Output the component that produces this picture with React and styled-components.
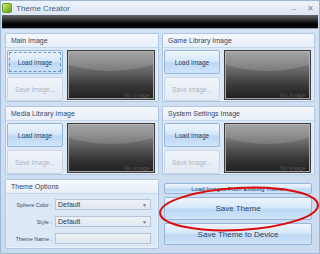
import React from "react";
import styled, { createGlobalStyle } from "styled-components";

const Global = createGlobalStyle`
  html, body { margin: 0; padding: 0; background: #fff; }
  body { font-family: "Liberation Sans", Arial, sans-serif; }
`;

const Window = styled.div`
  position: relative;
  width: 320px;
  height: 254px;
  box-sizing: border-box;
  background: #cddcef;
  border: 1px solid #9fb7d6;
  display: flex;
  flex-direction: column;
  overflow: hidden;
`;

const TitleBar = styled.div`
  height: 14px;
  display: flex;
  align-items: center;
  padding: 0 5px 0 1px;
  background: linear-gradient(#eef3fa, #dbe6f3);
  color: #4b5c7c;
  font-size: 8px;
  gap: 4px;
`;

const AppIcon = styled.div`
  width: 10px;
  height: 10px;
  border-radius: 2px;
  background: linear-gradient(135deg, #d8f07a, #8cc43a 55%, #5f9a1e);
  border: 1px solid #6c9a2c;
  box-sizing: border-box;
`;

const Title = styled.span`
  flex: 1;
`;

const Ctrl = styled.span`
  color: #7a889c;
  font-size: 8px;
  margin-left: 7px;
`;

const Strip = styled.div`
  height: 13px;
  margin: 0 1px;
  background: linear-gradient(#6a6a6a, #262626 45%, #000 70%, #0a0a0a);
  border-bottom: 1px solid #8aa2c2;
`;

const Body = styled.div`
  flex: 1;
  display: grid;
  grid-template-columns: 154px 153px;
  grid-template-rows: 69px 69px 70px;
  column-gap: 3px;
  row-gap: 4px;
  padding: 4px 0 0 4px;
  background: linear-gradient(#d3e1f3, #cbdbef);
`;

const Panel = styled.div`
  box-sizing: border-box;
  border: 1px solid #aec5e3;
  border-radius: 2px;
  background: #dde8f6;
  display: flex;
  flex-direction: column;
  box-shadow: inset 0 0 0 1px #eaf1fa;
`;

const PanelHeader = styled.div`
  height: 13px;
  flex: none;
  display: flex;
  align-items: center;
  padding-left: 5px;
  font-size: 7px;
  color: #3a4660;
  background: linear-gradient(#f5f8fd, #e7eff9);
  border-bottom: 1px solid #c6d7ec;
`;

const PanelContent = styled.div`
  display: flex;
  gap: 4px;
  padding: 2px 3px 0 1px;
`;

const ButtonCol = styled.div`
  display: flex;
  flex-direction: column;
  gap: 3px;
`;

const Btn = styled.div`
  box-sizing: border-box;
  width: ${(p) => p.$w || 56}px;
  height: ${(p) => p.$h || 24}px;
  display: flex;
  align-items: center;
  justify-content: center;
  font-size: ${(p) => p.$fs || 6.5}px;
  border-radius: 2px;
  white-space: nowrap;
  overflow: hidden;
  color: ${(p) => (p.$disabled ? "#aab6c6" : "#2a3e62")};
  border: 1px solid ${(p) => (p.$disabled ? "#c9d6e7" : "#93b6de")};
  background: ${(p) =>
    p.$disabled
      ? "linear-gradient(#f0f4fa, #e3eaf4)"
      : "linear-gradient(#eef5fd, #d6e8fa 45%, #bcd8f4 55%, #cfe4f9)"};
  outline: ${(p) => (p.$focus ? "1px dashed #6f93c0" : "none")};
  outline-offset: -3px;
`;

const Preview = styled.div`
  position: relative;
  box-sizing: border-box;
  width: 88px;
  height: 50px;
  border: 1px solid #3c3c3c;
  background: linear-gradient(#9a9a9a, #6e6e6e 35%, #3a3a3a 70%, #1f1f1f);
  overflow: hidden;
  box-shadow: inset 0 0 0 1px #a8a8a8;
`;

const Gloss = styled.div`
  position: absolute;
  left: -30px;
  right: -30px;
  top: -50px;
  height: 70px;
  border-radius: 50%;
  background: linear-gradient(rgba(255,255,255,0.05), rgba(255,255,255,0.14));
`;

const NoImage = styled.span`
  position: absolute;
  right: 4px;
  bottom: 1px;
  font-size: 6px;
  color: #5a5a5a;
`;

const Form = styled.div`
  display: grid;
  grid-template-columns: 45px 96px;
  column-gap: 3px;
  row-gap: 6px;
  padding: 5px 0 0 1px;
  align-items: center;
`;

const Label = styled.span`
  font-size: 5.5px;
  color: #3c4a64;
  text-align: right;
  white-space: nowrap;
`;

const Field = styled.div`
  box-sizing: border-box;
  height: 11px;
  border: 1px solid #b4c5da;
  background: linear-gradient(#edf1f6, #e1e8f0);
  display: flex;
  align-items: center;
  justify-content: space-between;
  padding: 0 3px 0 2px;
  font-size: 7px;
  color: #2e3440;
`;

const Arrow = styled.span`
  font-size: 5px;
  color: #6a7a90;
`;

const ActionCol = styled.div`
  display: flex;
  flex-direction: column;
  gap: 3px;
  padding: 4px 0 0 2px;
`;

const Circle = styled.svg`
  position: absolute;
  left: 0;
  top: 0;
  pointer-events: none;
`;

function ImagePanel({ title }) {
  return (
    <Panel>
      <PanelHeader>{title}</PanelHeader>
      <PanelContent>
        <ButtonCol>
          <Btn $focus={title === "Main Image"}>Load Image</Btn>
          <Btn $disabled>Save Image...</Btn>
        </ButtonCol>
        <Preview>
          <Gloss />
          <NoImage>No Image</NoImage>
        </Preview>
      </PanelContent>
    </Panel>
  );
}

export default function App() {
  return (
    <>
      <Global />
      <Window>
        <TitleBar>
          <AppIcon />
          <Title>Theme Creator</Title>
          <Ctrl>–</Ctrl>
          <Ctrl>✕</Ctrl>
        </TitleBar>
        <Strip />
        <Body>
          <ImagePanel title="Main Image" />
          <ImagePanel title="Game Library Image" />
          <ImagePanel title="Media Library Image" />
          <ImagePanel title="System Settings Image" />
          <Panel>
            <PanelHeader>Theme Options</PanelHeader>
            <Form>
              <Label>Sphere Color :</Label>
              <Field>
                Default<Arrow>▼</Arrow>
              </Field>
              <Label>Style :</Label>
              <Field>
                Default<Arrow>▼</Arrow>
              </Field>
              <Label>Theme Name :</Label>
              <Field />
            </Form>
          </Panel>
          <ActionCol>
            <Btn $w={148} $h={11} $fs={6}>Load Images From Existing Theme</Btn>
            <Btn $w={148} $h={23} $fs={8}>Save Theme</Btn>
            <Btn $w={148} $h={22} $fs={8}>Save Theme to Device</Btn>
          </ActionCol>
        </Body>
        <Circle width="320" height="254" viewBox="0 0 320 254">
          <ellipse
            cx="238"
            cy="208"
            rx="79"
            ry="21"
            transform="rotate(-3 238 208)"
            fill="none"
            stroke="#dd0a0a"
            strokeWidth="2"
          />
        </Circle>
      </Window>
    </>
  );
}
